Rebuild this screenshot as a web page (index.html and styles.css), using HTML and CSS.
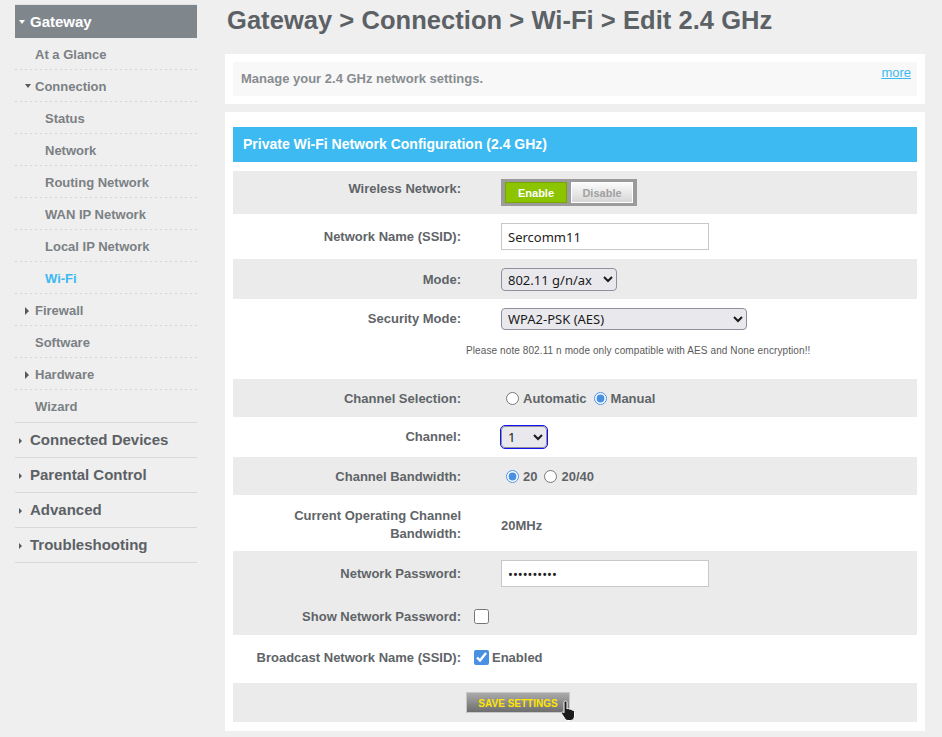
FILE: index.html
```html
<!DOCTYPE html>
<html lang="en">
<head>
    <meta charset="UTF-8">
    <meta name="viewport" content="width=device-width, initial-scale=1.0">
    <title>Gateway - Wi-Fi - Edit 2.4 GHz</title>
    <link rel="stylesheet" href="styles.css">
</head>
<body>
    <div class="layout">
        <nav class="sidebar">
            <div class="nav-head"><span class="caret-down light"></span>Gateway</div>
            <ul class="subnav">
                <li><a href="#">At a Glance</a></li>
                <li class="parent"><span class="caret-down"></span><a href="#">Connection</a></li>
                <li class="child"><a href="#">Status</a></li>
                <li class="child"><a href="#">Network</a></li>
                <li class="child"><a href="#">Routing Network</a></li>
                <li class="child"><a href="#">WAN IP Network</a></li>
                <li class="child"><a href="#">Local IP Network</a></li>
                <li class="child active"><a href="#">Wi-Fi</a></li>
                <li class="parent"><span class="caret-right"></span><a href="#">Firewall</a></li>
                <li><a href="#">Software</a></li>
                <li class="parent"><span class="caret-right"></span><a href="#">Hardware</a></li>
                <li class="last"><a href="#">Wizard</a></li>
            </ul>
            <ul class="topnav">
                <li><span class="caret-small"></span><a href="#">Connected Devices</a></li>
                <li><span class="caret-small"></span><a href="#">Parental Control</a></li>
                <li><span class="caret-small"></span><a href="#">Advanced</a></li>
                <li><span class="caret-small"></span><a href="#">Troubleshooting</a></li>
            </ul>
        </nav>

        <main class="content">
            <h1>Gateway &gt; Connection &gt; Wi-Fi &gt; Edit 2.4 GHz</h1>

            <div class="card">
                <div class="intro">
                    <p>Manage your 2.4 GHz network settings.</p>
                    <a href="#" class="more">more</a>
                </div>
            </div>

            <div class="card form-card">
                <h2>Private Wi-Fi Network Configuration (2.4 GHz)</h2>

                <div class="row shade switch-row">
                    <div class="field">
                        <span class="label label-top">Wireless Network:</span>
                        <div class="switch">
                            <span class="switch-on">Enable</span>
                            <span class="switch-off">Disable</span>
                        </div>
                    </div>
                </div>

                <div class="row pad-b9">
                    <div class="field">
                        <label class="label" for="ssid">Network Name (SSID):</label>
                        <input type="text" id="ssid" class="text-input" value="Sercomm11">
                    </div>
                </div>

                <div class="row shade">
                    <div class="field">
                        <label class="label" for="mode">Mode:</label>
                        <select id="mode" class="select mode-select">
                            <option>802.11 g/n/ax</option>
                        </select>
                    </div>
                </div>

                <div class="row">
                    <div class="field">
                        <label class="label" for="security">Security Mode:</label>
                        <select id="security" class="select security-select">
                            <option>WPA2-PSK (AES)</option>
                        </select>
                    </div>
                    <p class="note">Please note 802.11 n mode only compatible with AES and None encryption!!</p>
                </div>

                <div class="row shade">
                    <div class="field">
                        <span class="label">Channel Selection:</span>
                        <label class="choice"><input type="radio" name="chsel">Automatic</label>
                        <label class="choice"><input type="radio" name="chsel" checked>Manual</label>
                    </div>
                </div>

                <div class="row pad-b9">
                    <div class="field">
                        <label class="label" for="channel">Channel:</label>
                        <select id="channel" class="select channel-select">
                            <option>1</option>
                        </select>
                    </div>
                </div>

                <div class="row shade">
                    <div class="field">
                        <span class="label">Channel Bandwidth:</span>
                        <label class="choice"><input type="radio" name="bw" checked>20</label>
                        <label class="choice"><input type="radio" name="bw">20/40</label>
                    </div>
                </div>

                <div class="row pad-t12">
                    <div class="field">
                        <span class="label label-wrap">Current Operating Channel Bandwidth:</span>
                        <span class="value">20MHz</span>
                    </div>
                </div>

                <div class="row shade">
                    <div class="field">
                        <label class="label" for="pass">Network Password:</label>
                        <input type="password" id="pass" class="text-input" value="1234567890">
                    </div>
                </div>

                <div class="row shade show-row">
                    <div class="field tight">
                        <label class="label" for="showpass">Show Network Password:</label>
                        <input type="checkbox" id="showpass" class="check">
                    </div>
                </div>

                <div class="row broadcast-row">
                    <div class="field tight">
                        <span class="label">Broadcast Network Name (SSID):</span>
                        <label class="choice"><input type="checkbox" class="check" checked>Enabled</label>
                    </div>
                </div>

                <div class="row shade actions">
                    <div class="btn-wrap">
                        <button class="save-btn">SAVE SETTINGS</button>
                        <!-- mouse pointer resting on the button -->
                        <svg class="pointer" width="17" height="22" viewBox="0 0 17 22">
                            <path d="M5.5 1C6.5 1 7 1.6 7 2.5V9L7.5 8.6C8.3 8.3 9 8.6 9.2 9.2C9.9 8.8 10.8 9 11 9.7C11.7 9.4 12.6 9.7 12.8 10.5C13.5 10.3 14.5 10.7 14.5 11.8V16C14.5 18.5 13 20.5 10.5 20.5H8C6.5 20.5 5.6 19.8 4.8 18.6L1.8 14C1.3 13.2 1.6 12.4 2.3 12.1C3 11.8 3.6 12.1 4 12.7V2.5C4 1.6 4.5 1 5.5 1Z" fill="#1c1c1c" stroke="#ffffff" stroke-width="1"/>
                        </svg>
                    </div>
                </div>
            </div>
        </main>
    </div>
</body>
</html>
```

FILE: styles.css
```css
body {
    margin: 0;
    background-color: #efefef;
    font-family: "Liberation Sans", Arial, sans-serif;
    color: #5f6468;
}
a {
    color: inherit;
    text-decoration: none;
}
ul {
    list-style: none;
    margin: 0;
    padding: 0;
}
.layout {
    display: flex;
    padding-left: 15px;
}

/* sidebar */
.sidebar {
    width: 182px;
    flex-shrink: 0;
    padding-top: 4px;
}
.nav-head {
    border-top: 1px solid #e2e2e2;
    background-color: #7f878d;
    color: #ffffff;
    font-weight: bold;
    font-size: 15px;
    height: 33px;
    line-height: 33px;
    padding-left: 4px;
}
.subnav li {
    height: 31px;
    line-height: 33px;
    padding-left: 20px;
    font-size: 13px;
    font-weight: bold;
    color: #7b8084;
    background-image: linear-gradient(to right, #d4d4d4 50%, transparent 50%);
    background-size: 5px 1px;
    background-repeat: repeat-x;
    background-position: left bottom;
    padding-bottom: 1px;
}
.subnav li.parent {
    padding-left: 10px;
}
.subnav li.child {
    padding-left: 30px;
}
.subnav li.active {
    color: #3cb9ef;
}
.subnav li.last {
    background-image: none;
}
.topnav {
    border-top: 1px solid #d8d8d8;
}
.topnav li {
    height: 34px;
    line-height: 34px;
    border-bottom: 1px solid #d8d8d8;
    padding-left: 4px;
    font-size: 15px;
    font-weight: bold;
    color: #5c6165;
}
.caret-down {
    display: inline-block;
    width: 0;
    height: 0;
    border-left: 3px solid transparent;
    border-right: 3px solid transparent;
    border-top: 4px solid #555a5e;
    vertical-align: middle;
    margin: 0 4px 3px 0;
}
.caret-down.light {
    border-top-color: #ffffff;
    margin-right: 5px;
}
.caret-right {
    display: inline-block;
    width: 0;
    height: 0;
    border-top: 4px solid transparent;
    border-bottom: 4px solid transparent;
    border-left: 4px solid #555a5e;
    vertical-align: middle;
    margin: 0 6px 2px 0;
}
.caret-small {
    display: inline-block;
    width: 0;
    height: 0;
    border-top: 3px solid transparent;
    border-bottom: 3px solid transparent;
    border-left: 3px solid #555a5e;
    vertical-align: middle;
    margin: 0 8px 1px 0;
}

/* main column */
.content {
    width: 700px;
    margin-left: 28px;
    padding-top: 6px;
}
h1 {
    margin: 0 0 19px 2px;
    font-size: 25.5px;
    font-weight: bold;
    color: #5c6166;
    line-height: 29px;
    letter-spacing: 0.05px;
}
.card {
    background-color: #ffffff;
    padding: 8px;
    margin-bottom: 8px;
}
.intro {
    background-color: #f8f8f8;
    height: 34px;
    display: flex;
    justify-content: space-between;
    align-items: flex-start;
    padding: 0 6px 0 8px;
}
.intro p {
    margin: 0;
    line-height: 34px;
    font-size: 13px;
    font-weight: bold;
    color: #878c90;
}
.more {
    margin-top: 3px;
    line-height: 16px;
    font-size: 13px;
    color: #3cb9ef;
    text-decoration: underline;
}
.form-card {
    padding: 15px 8px 9px;
}
.form-card h2 {
    margin: 0 0 9px;
    height: 35px;
    line-height: 35px;
    padding-left: 10px;
    background-color: #3cbaf1;
    color: #ffffff;
    font-size: 14px;
    font-weight: bold;
}

/* form rows */
.row {
    padding: 9px 0 8px;
}
.row.shade {
    background-color: #ebebeb;
}
.row.switch-row {
    padding: 8px 0 8px;
}
.row.pad-b9 {
    padding-bottom: 9px;
}
.row.pad-t12 {
    padding-top: 12px;
}
.row.show-row {
    padding: 11px 0 8px;
}
.row.broadcast-row {
    padding: 12px 0 15px;
}
.field {
    display: flex;
    align-items: center;
    min-height: 21px;
}
.label {
    width: 228px;
    flex-shrink: 0;
    margin-right: 40px;
    text-align: right;
    font-size: 13px;
    font-weight: bold;
    line-height: 16px;
    color: #5f6468;
}
.label-top {
    align-self: flex-start;
    padding-top: 2px;
}
.label-wrap {
    line-height: 18px;
}
.field.tight .label {
    margin-right: 9px;
}
.value {
    font-size: 13px;
    font-weight: bold;
}
.text-input {
    box-sizing: border-box;
    width: 208px;
    height: 27px;
    border: 1px solid #c8c8c8;
    padding: 0 6px;
    font-family: "Noto Sans", sans-serif;
    font-size: 13px;
    color: #222222;
    background-color: #ffffff;
}
.select {
    box-sizing: border-box;
    height: 23px;
    border: 1px solid #8f8f9d;
    border-radius: 4px;
    background-color: #e9e9ed;
    font-family: "Noto Sans", sans-serif;
    font-size: 13px;
    color: #1a1a1a;
    padding: 0 2px;
}
.mode-select {
    width: 116px;
}
.security-select {
    width: 246px;
    height: 22px;
}
.channel-select {
    width: 46px;
    height: 22px;
    outline: 1px solid #1414f0;
}
.note {
    margin: 14px 0 13px;
    padding-left: 233px;
    font-size: 10px;
    line-height: 14px;
    letter-spacing: 0.1px;
    color: #5a5a5a;
}
.choice {
    display: inline-flex;
    align-items: center;
    margin-right: 2px;
    font-size: 13px;
    font-weight: bold;
    color: #5f6468;
}
.choice input[type="radio"] {
    margin: 0 4px 0 5px;
    width: 13px;
    height: 13px;
    accent-color: #4a90e2;
}
.check {
    width: 15px;
    height: 15px;
    margin: 0 3px 0 4px;
    accent-color: #4a90e2;
}

/* enable / disable switch */
.switch {
    display: inline-flex;
    gap: 4px;
    padding: 3px 4px;
    background-color: #9b9b9b;
}
.switch span {
    box-sizing: border-box;
    height: 21px;
    line-height: 20px;
    text-align: center;
    font-size: 11px;
    font-weight: bold;
}
.switch-on {
    width: 62px;
    background-color: #8cc500;
    border: 1px solid #76a700;
    color: #ffffff;
}
.switch-off {
    width: 62px;
    background: linear-gradient(#fbfbfb, #d6d6d6);
    border: 1px solid #ffffff;
    color: #a0a0a0;
}

/* save */
.actions {
    padding: 9px 0;
}
.btn-wrap {
    position: relative;
    margin-left: 233px;
    width: 104px;
}
.save-btn {
    display: block;
    width: 104px;
    height: 21px;
    border: 1px solid #c6c6c6;
    background: linear-gradient(#ababab, #6d6d6d);
    color: #ffe500;
    font-family: "Liberation Sans", Arial, sans-serif;
    font-size: 10px;
    font-weight: bold;
    padding: 1px 0 0;
    cursor: pointer;
}
.pointer {
    position: absolute;
    left: 94px;
    top: 8px;
}
```
